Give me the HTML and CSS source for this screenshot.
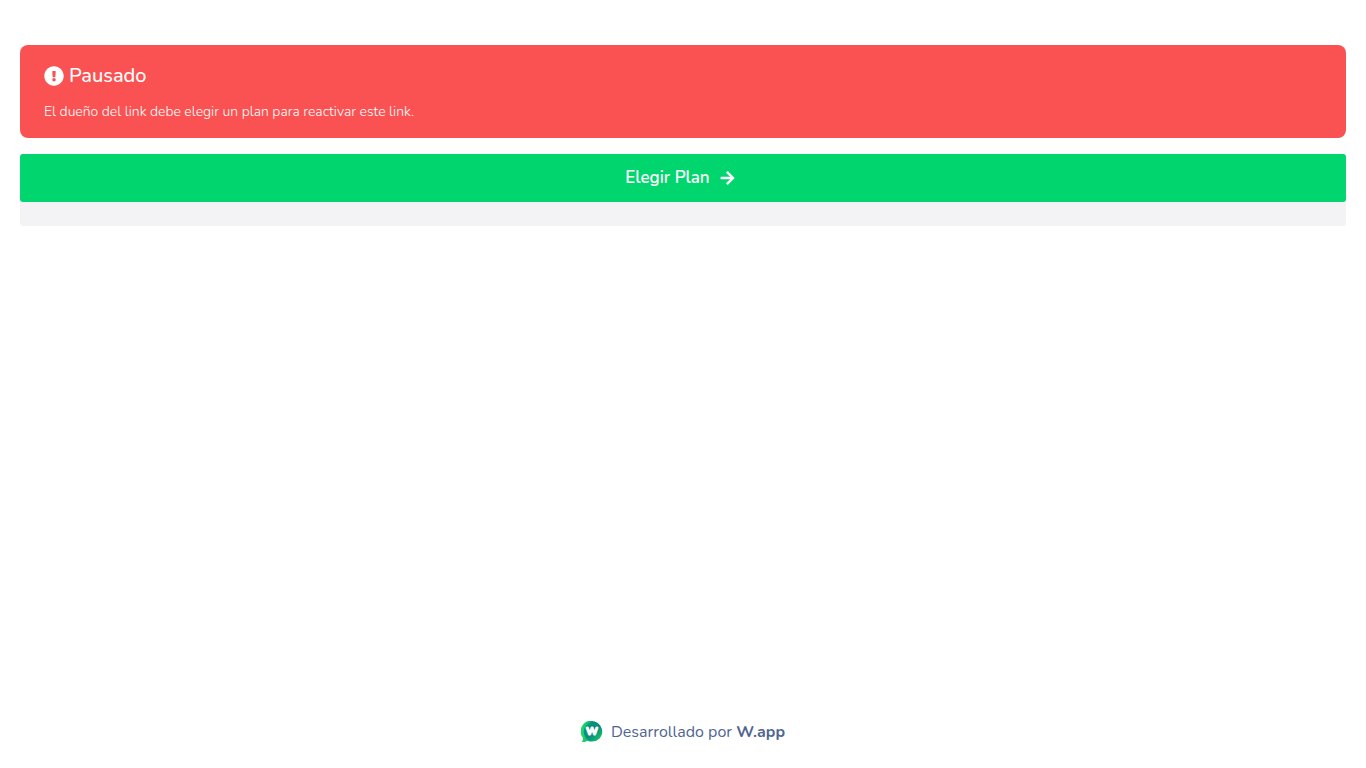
FILE: index.html
```html
<!DOCTYPE html>
<html lang="es">
<head>
  <meta charset="utf-8">
  <meta name="viewport" content="width=device-width, initial-scale=1">
  <title>Pausado</title>
  <link rel="stylesheet" href="styles.css">
</head>
<body class="page">
  <main class="content">
    <section class="alert" role="alert">
      <h1 class="alert-title">
        <svg class="alert-icon" viewBox="0 0 512 512" aria-hidden="true"><path fill="currentColor" d="M504 256c0 137-111 248-248 248S8 393 8 256 119 8 256 8s248 111 248 248zm-248 50a46 46 0 1 0 0 92 46 46 0 0 0 0-92zm-43.700-165.300 7.400 136c.4 6.400 5.600 11.300 12 11.300h48.600c6.400 0 11.600-5 12-11.300l7.400-136c.4-6.900-5.100-12.700-12-12.700h-63.400c-6.900 0-12.300 5.800-12 12.700z"/></svg>
        <span>Pausado</span>
      </h1>
      <p class="alert-text">El dueño del link debe elegir un plan para reactivar este link.</p>
    </section>
    <div class="action">
      <button class="plan-button" type="button">
        <span>Elegir Plan</span>
        <svg class="arrow-icon" viewBox="0 0 448 512" aria-hidden="true"><path fill="currentColor" d="M190.500 66.900l22.200-22.200c9.400-9.400 24.600-9.400 33.900 0L441 239c9.400 9.400 9.400 24.600 0 33.900L246.600 467.300c-9.400 9.400-24.600 9.400-33.900 0l-22.200-22.200c-9.500-9.500-9.300-25 .4-34.300L311.400 296H24c-13.300 0-24-10.700-24-24v-32c0-13.300 10.700-24 24-24h287.400L190.900 101.200c-9.800-9.300-10-24.800-.4-34.300z"/></svg>
      </button>
    </div>
  </main>
  <footer class="footer">
    <a class="credit" href="#">
      <svg class="logo" viewBox="0 0 22 22" aria-hidden="true">
        <defs>
          <linearGradient id="ring" x1="0" y1="0" x2="1" y2="0">
            <stop offset="0" stop-color="#22dc64"/>
            <stop offset=".35" stop-color="#16bd6e"/>
            <stop offset=".6" stop-color="#078c7e"/>
            <stop offset="1" stop-color="#07957c"/>
          </linearGradient>
          <linearGradient id="disc" x1="0" y1="0" x2="1" y2="1">
            <stop offset="0" stop-color="#0a9a79"/>
            <stop offset=".5" stop-color="#078a80"/>
            <stop offset=".75" stop-color="#0fae73"/>
            <stop offset="1" stop-color="#25dc66"/>
          </linearGradient>
        </defs>
        <path fill="url(#ring)" d="M11.300 0a10.300 10.300 0 1 1-4.900 19.700C4.900 20.700 2.900 21.100.7 20.900c1-1.200 1.500-2.500 1.300-4.100A10.300 10.300 0 0 1 11.300 0z"/>
        <circle cx="12" cy="10.800" r="9.300" fill="url(#disc)"/>
        <text class="logo-letter" x="11" y="14" text-anchor="middle">W</text>
      </svg>
      <span>Desarrollado por <strong>W.app</strong></span>
    </a>
  </footer>
</body>
</html>
```
FILE: styles.css
```css
* {
  box-sizing: border-box;
}

.page {
  display: flex;
  flex-direction: column;
  min-height: 100vh;
  margin: 0;
  padding: 45px 20px 24px;
  background: #fff;
  font-family: Nunito, "Open Sans", sans-serif;
}

.content {
  display: flex;
  flex: 1;
  flex-direction: column;
  gap: 16px;
}

.alert {
  display: flex;
  flex-direction: column;
  gap: 10px;
  padding: 16px 24px;
  border-radius: 8px;
  background: #fa5252;
  color: #fff;
}

.alert-title {
  display: flex;
  align-items: center;
  gap: 5px;
  margin: 0;
  font-size: 20px;
  font-weight: 500;
  line-height: 30px;
}

.alert-icon {
  width: 20px;
  height: 20px;
}

.alert-text {
  margin: 0;
  font-size: 14px;
  font-weight: 300;
  line-height: 21px;
}

.action {
  padding-bottom: 24px;
  border-radius: 3px;
  background: #f3f3f6;
}

.plan-button {
  display: flex;
  align-items: center;
  justify-content: center;
  gap: 10px;
  width: 100%;
  height: 48px;
  padding: 0 6px 0 0;
  border: 0;
  border-radius: 3px;
  background: #00d66d;
  color: #fff;
  font: 600 17px/24px Nunito, "Open Sans", sans-serif;
  cursor: pointer;
}

.arrow-icon {
  width: 15px;
  height: 16px;
}

.footer {
  display: flex;
  justify-content: center;
}

.credit {
  display: flex;
  align-items: center;
  gap: 8px;
  color: #506690;
  font-size: 16px;
  line-height: 24px;
  text-decoration: none;
}

.logo {
  width: 22px;
  height: 22px;
}

.logo-letter {
  fill: #fff;
  stroke: #fff;
  stroke-width: 1px;
  stroke-linejoin: round;
  font-family: Nunito, sans-serif;
  font-size: 11px;
  font-weight: 900;
}
```
